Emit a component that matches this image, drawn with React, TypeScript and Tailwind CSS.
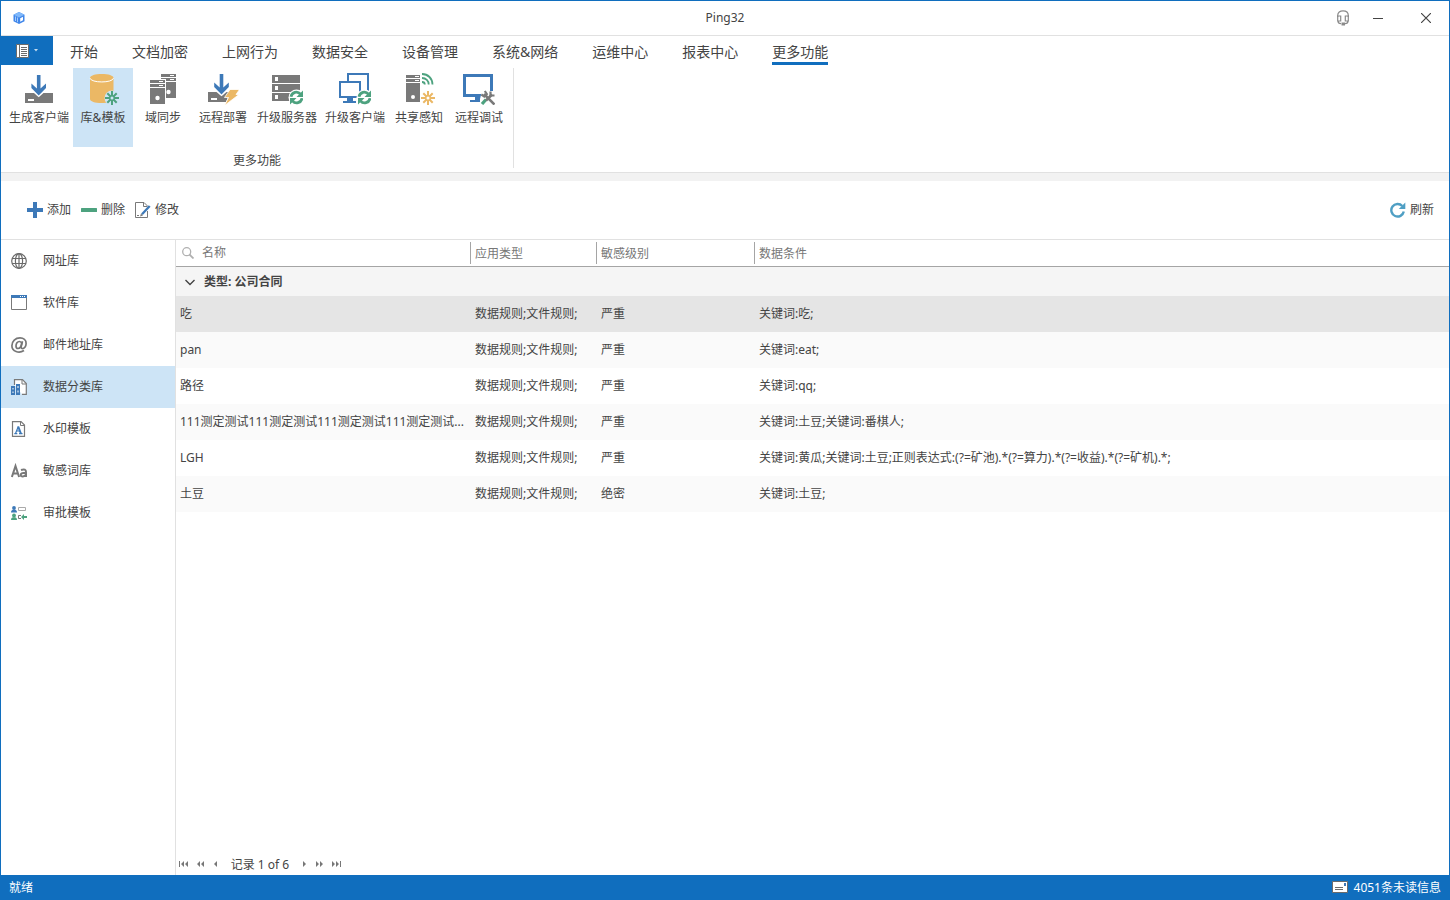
import type { ReactNode } from "react";
import clsx from "clsx";

interface IIconProps {
  size?: number;
  children: ReactNode;
}

interface IRibbonAction {
  label: string;
  wide?: boolean;
  active?: boolean;
  icon: ReactNode;
}

interface IDataClass {
  name: string;
  type: string;
  level: string;
  condition: string;
}

const GRAY = "#797979";
const BLUE = "#3d79b8";
const GREEN = "#4da27f";
const YELLOW = "#ebb865";

function Icon({ size = 16, children }: IIconProps) {
  return (
    <svg
      width={size}
      height={size}
      viewBox={`0 0 ${size} ${size}`}
      fill="none"
      className="shrink-0"
      aria-hidden="true"
    >
      {children}
    </svg>
  );
}

function SyncBadge() {
  return (
    <g>
      <circle cx="25.5" cy="24.5" r="8" fill="#fff" />
      <path
        d="M20 23.8c.8-4.800 6.500-6.300 9.500-2.600M31 25.200c-.8 4.800-6.500 6.300-9.500 2.600"
        stroke={GREEN}
        strokeWidth="2.800"
      />
      <path d="M32 17.500v6.500h-6.500zM19 31.500v-6.500h6.500z" fill={GREEN} />
    </g>
  );
}

function DownArrow({ x }: { x: number }) {
  return (
    <path
      d={`M${x - 1.8} 2h3.600v13.500l5.500-5v4.500L${x} 22.500l-7.300-7.500v-4.500l5.500 5z`}
      fill={BLUE}
    />
  );
}

function Spokes({ x, y, color, hole }: { x: number; y: number; color: string; hole: string }) {
  return (
    <g>
      <path
        d={`M${x} ${y - 7}v14M${x - 7} ${y}h14M${x - 4.7} ${y - 4.7}l9.400 9.400M${x + 4.7} ${y - 4.7}l-9.400 9.400`}
        stroke={color}
        strokeWidth="2"
      />
      <circle cx={x} cy={y} r="3" fill={color} />
      <circle cx={x} cy={y} r="1.500" fill={hole} />
    </g>
  );
}

const tabs = [
  "开始",
  "文档加密",
  "上网行为",
  "数据安全",
  "设备管理",
  "系统&网络",
  "运维中心",
  "报表中心",
  "更多功能",
];

const ribbonActions: IRibbonAction[] = [
  {
    label: "生成客户端",
    wide: true,
    icon: (
      <Icon size={32}>
        <path d="M2 20h28v10h-28z" fill={GRAY} />
        <path d="M11 20h9.500l-4.800 4.200z" fill="#fff" />
        <DownArrow x={15.7} />
        <path d="M5 26h6v2h-6z" fill="#fff" />
      </Icon>
    ),
  },
  {
    label: "库&模板",
    active: true,
    icon: (
      <Icon size={32}>
        <path
          d="M3 5v21c0 2.500 5 4 11.500 4s12-1.500 12-4V5c0-2.500-5.200-4-11.700-4S3 2.500 3 5z"
          fill={YELLOW}
        />
        <path d="M3 5.200c1 5 22.500 5 23.500 0" stroke="#fff" strokeWidth="1" />
        <circle cx="25" cy="25" r="7.500" fill="#cde4f6" />
        <Spokes x={25} y={25} color={GREEN} hole="#cde4f6" />
      </Icon>
    ),
  },
  {
    label: "域同步",
    icon: (
      <Icon size={32}>
        <path d="M14 1h15v24h-15z" fill={GRAY} />
        <path d="M14 4.500h15M14 8.500h15" stroke="#fff" />
        <path d="M23 2.500h4M23 6.500h4" stroke="#fff" />
        <circle cx="21.500" cy="19" r="2.200" fill="#fff" />
        <path d="M2 6h17v26h-17z" fill="#fff" />
        <path d="M3 7h15v24h-15z" fill={GRAY} />
        <path d="M3 10.500h15M3 14.500h15" stroke="#fff" />
        <path d="M12 8.500h4M12 12.500h4" stroke="#fff" />
        <circle cx="10.500" cy="25" r="2.200" fill="#fff" />
      </Icon>
    ),
  },
  {
    label: "远程部署",
    icon: (
      <Icon size={32}>
        <path d="M1 19h22l-4 10h-18z" fill={GRAY} />
        <path d="M9.500 19h10l-5 4.200z" fill="#fff" />
        <g transform="translate(0 -1)">
          <DownArrow x={14.5} />
        </g>
        <path d="M4 25h6v2h-6z" fill="#fff" />
        <path
          d="M23 16.500h9.500l-3.500 5h3L17.500 32.500l4-8h-4z"
          fill={YELLOW}
          stroke="#fff"
          strokeWidth=".8"
        />
      </Icon>
    ),
  },
  {
    label: "升级服务器",
    wide: true,
    icon: (
      <Icon size={32}>
        <path d="M1 2h28v8H1zM1 11h28v8H1zM1 20h28v8H1z" fill={GRAY} />
        <path d="M4 4h3v4H4zM4 13h3v4H4zM4 22h3v4H4z" fill="#fff" />
        <SyncBadge />
      </Icon>
    ),
  },
  {
    label: "升级客户端",
    wide: true,
    icon: (
      <Icon size={32}>
        <path d="M9 8V1h20v17h-7" stroke={BLUE} strokeWidth="2" />
        <path d="M1 9h20v15h-20z" stroke={BLUE} strokeWidth="2" />
        <path d="M8 25h6v3h3v2H4v-2h4z" fill={BLUE} />
        <SyncBadge />
      </Icon>
    ),
  },
  {
    label: "共享感知",
    icon: (
      <Icon size={32}>
        <path d="M3 2h14v27H3z" fill={GRAY} />
        <path d="M3 5.500h14M3 9.500h14" stroke="#fff" />
        <path d="M12 3.500h4M12 7.500h4" stroke="#fff" />
        <circle cx="10" cy="24" r="2" fill="#fff" />
        <path
          d="M19 1c6 0 10.500 4.500 10.500 10.500M19 5c4 0 6.700 3 6.700 6.500M19 9c1.700 0 2.800 1 2.800 2.500"
          stroke={GREEN}
          strokeWidth="1.800"
        />
        <circle cx="25" cy="25" r="7" fill="#fff" />
        <Spokes x={25} y={25} color={YELLOW} hole="#fff" />
      </Icon>
    ),
  },
  {
    label: "远程调试",
    icon: (
      <Icon size={32}>
        <path d="M1.500 2.500h27v20h-27z" stroke={BLUE} strokeWidth="3" />
        <path d="M12 24h6v3h2v2H7v-2h5z" fill={BLUE} />
        <path d="M19 18h13v14H17v-6z" fill="#fff" />
        <path d="M23 26.500l-4 4.500" stroke={GREEN} strokeWidth="3.200" />
        <path d="M21 21l10.500 10.500" stroke={GRAY} strokeWidth="2.600" />
        <path d="M29 21.500l-6 6" stroke={GRAY} strokeWidth="2.600" />
        <path
          d="M18.300 21.500l3 2 2.500-2.500-2-3M27.500 18.500v4h4"
          stroke={GRAY}
          strokeWidth="2.200"
        />
      </Icon>
    ),
  },
];

const libraries = [
  {
    label: "网址库",
    icon: (
      <Icon>
        <g stroke="#6a6a6a" strokeWidth="1.200">
          <circle cx="8" cy="8" r="7.300" />
          <ellipse cx="8" cy="8" rx="3.600" ry="7.300" />
          <path d="M1 5.500h14M1 10.500h14M8 1v14" />
        </g>
      </Icon>
    ),
  },
  {
    label: "软件库",
    icon: (
      <Icon>
        <path d="M.5 1.500h15v13H.500z" stroke={GRAY} />
        <path d="M0 0h16v3H0z" fill={BLUE} />
        <path d="M9 1h1v1H9zM11 1h1v1h-1zM13 1h1v1h-1z" fill="#fff" />
      </Icon>
    ),
  },
  {
    label: "邮件地址库",
    icon: (
      <Icon>
        <g stroke="#777" strokeWidth="1.700">
          <path d="M13 13.500C8 16.800.900 14.500.900 8.700.900 4.200 4.400.900 9 .900c3.600 0 6.100 2.200 6.100 5.500 0 3.200-2 5.200-3.600 5.200-1.500 0-1.500-1.200-1.200-2.600L11.500 4.300" />
          <path d="M10.700 6.500C10.400 5 9.500 4.500 8.400 4.500 6.400 4.500 5 6.600 5 8.900c0 1.700.8 2.600 2 2.600 1.900 0 3.200-2 3.700-5z" />
        </g>
      </Icon>
    ),
  },
  {
    label: "数据分类库",
    icon: (
      <Icon>
        <path d="M3.500 6V.700h8L15.300 4.500v10.800H11" fill="#fff" stroke={GRAY} strokeWidth="1.200" />
        <path d="M11 1v4h4" stroke={GRAY} />
        <path d="M0 7h4v9H0zM5 5h4v11H5z" fill={BLUE} />
        <path d="M1.500 9h1v1.500h-1zM1.500 12.500h1V14h-1zM6.500 7h1v2h-1zM6.500 11.500h1v2h-1z" fill="#fff" />
      </Icon>
    ),
  },
  {
    label: "水印模板",
    icon: (
      <Icon>
        <path d="M1.500.600h8.500l3.500 3.500v11.300h-12z" stroke={GRAY} strokeWidth="1.200" />
        <path d="M9.500 1v3.500h4" stroke={GRAY} />
        <path
          d="M3.300 12.600h3M8 12.600h3.500M4.500 12.500L7.300 5.500M5.500 10h3.500"
          stroke={BLUE}
          strokeWidth="1.200"
        />
        <path d="M7.200 5.500l2.700 7" stroke={BLUE} strokeWidth="2" />
      </Icon>
    ),
  },
  {
    label: "敏感词库",
    icon: (
      <Icon>
        <path d="M.9 14L4.500 3 8.100 14M2 10.500h5" stroke={GRAY} strokeWidth="2" />
        <path
          d="M10 7c3.500-1.200 5-.3 5 2V14M15 9.700c-3.500 0-5.300.6-5.300 2.200 0 2.200 4 2 5.300-.4"
          stroke={GRAY}
          strokeWidth="2"
        />
      </Icon>
    ),
  },
  {
    label: "审批模板",
    icon: (
      <Icon>
        <circle cx="3" cy="3" r="1.900" fill={BLUE} />
        <path d="M0 7.500C0 5 1.500 4.800 3 4.800s3 .2 3 2.700z" fill={BLUE} />
        <circle cx="3" cy="10.500" r="1.900" fill={GREEN} />
        <path d="M0 15c0-2.500 1.500-2.700 3-2.700s3 .2 3 2.700z" fill={GREEN} />
        <path d="M7.500 2.500h7v3h-7z" stroke="#aaa" />
        <path d="M10 10.500H7.500v3H10" stroke={GRAY} />
        <path d="M10 12l3-3v2h3v2h-3v2z" fill={GREEN} />
      </Icon>
    ),
  },
];

const rows: IDataClass[] = [
  { name: "吃", type: "数据规则;文件规则;", level: "严重", condition: "关键词:吃;" },
  { name: "pan", type: "数据规则;文件规则;", level: "严重", condition: "关键词:eat;" },
  { name: "路径", type: "数据规则;文件规则;", level: "严重", condition: "关键词:qq;" },
  {
    name: "111测定测试111测定测试111测定测试111测定测试...",
    type: "数据规则;文件规则;",
    level: "严重",
    condition: "关键词:土豆;关键词:番棋人;",
  },
  {
    name: "LGH",
    type: "数据规则;文件规则;",
    level: "严重",
    condition: "关键词:黄瓜;关键词:土豆;正则表达式:(?=矿池).*(?=算力).*(?=收益).*(?=矿机).*;",
  },
  { name: "土豆", type: "数据规则;文件规则;", level: "绝密", condition: "关键词:土豆;" },
];

function TitleBar() {
  return (
    <header className="grid h-[35px] grid-cols-[1fr_auto_1fr] items-center border-b border-[#e1e1e1]">
      <div className="pl-3">
        <svg width="12" height="12" viewBox="0 0 12 12" aria-hidden="true">
          <path d="M6 0l5.500 2.700v6.500L6 12 .500 9.200V2.700z" fill="#3f86ea" />
          <path d="M6 0l5.500 2.700L6 5.400.500 2.700z" fill="#7fb8fa" />
          <path d="M7.200 6.300l2.800-1.500v3.500L7.200 9.800z" fill="#fff" />
          <path d="M2.500 4.500v4.500M4.500 5.500v4.700" stroke="#bcdcff" strokeWidth=".8" />
        </svg>
      </div>
      <h1>Ping32</h1>
      <div className="flex h-full justify-end">
        <button aria-label="客服" className="flex w-5 items-center justify-center">
          <Icon>
            <g stroke="#8a8a8a" strokeWidth="1.200">
              <path d="M2.700 7V5.500C2.700 2.500 5 .800 8 .800s5.300 1.700 5.300 4.700V7" />
              <path d="M2.700 6h3v5h-3zM10.300 6h3v5h-3zM3 11c0 1.800 1 2.700 3 2.700M13 11c0 1.800-1 2.700-3 2.700" />
            </g>
            <path d="M6.500 12.500h3.500v3H6.500z" fill="#8a8a8a" />
          </Icon>
        </button>
        <button aria-label="最小化" className="flex w-[50px] items-center justify-center">
          <Icon size={10}>
            <path d="M0 5.500h10" stroke="#444" />
          </Icon>
        </button>
        <button aria-label="关闭" className="flex w-[46px] items-center justify-center">
          <Icon size={10}>
            <path d="M0 0l10 10M10 0L0 10" stroke="#444" strokeWidth="1.200" />
          </Icon>
        </button>
      </div>
    </header>
  );
}

function TabBar() {
  return (
    <nav className="flex h-[29px]">
      <button aria-label="文件" className="flex w-[52px] items-center justify-center gap-1 bg-[#106ebe]">
        <Icon size={14}>
          <path d="M.5.500h12v13H.500z" fill="#fff" stroke="#6b6b6b" />
          <path d="M3.500 1v12" stroke="#6b6b6b" />
          <path d="M5 3.500h6M5 5.500h6M5 7.500h6M5 9.500h6M5 11.500h6" stroke="#6b6b6b" />
        </Icon>
        <svg width="4" height="3" viewBox="0 0 4 3" aria-hidden="true">
          <path d="M0 0h4L2 2.500z" fill="#c5dcf0" />
        </svg>
      </button>
      {tabs.map((tab) => (
        <button key={tab} className="px-[17px] text-sm">
          <span
            className={clsx(
              "flex h-[29px] items-center border-b-3 pt-1.5",
              tab === "更多功能" ? "border-[#106ebe]" : "border-transparent",
            )}
          >
            {tab}
          </span>
        </button>
      ))}
    </nav>
  );
}

function Ribbon() {
  return (
    <section className="flex h-[108px] border-b border-[#e1e1e1] pt-[3px]">
      <div className="mb-1 flex flex-col border-r border-[#e1e1e1] px-1">
        <div className="flex h-20">
          {ribbonActions.map((action) => (
            <button
              key={action.label}
              className={clsx(
                "flex flex-col items-center gap-[5px] pt-[5px] whitespace-nowrap",
                action.wide ? "w-[68px]" : "w-[60px]",
                action.active && "bg-[#cde4f6]",
              )}
            >
              {action.icon}
              {action.label}
            </button>
          ))}
        </div>
        <div className="pt-[7px] text-center leading-[14px]">更多功能</div>
      </div>
    </section>
  );
}

function Toolbar() {
  return (
    <div className="flex h-[59px] items-center gap-2.5 border-b border-[#e1e1e1] pr-[15px] pl-[26px]">
      <button className="flex items-center gap-1">
        <Icon>
          <path d="M6 0h4v6h6v4h-6v6H6v-6H0V6h6z" fill={BLUE} />
        </Icon>
        添加
      </button>
      <button className="flex items-center gap-1">
        <Icon>
          <rect y="6" width="16" height="4" rx=".500" fill={GREEN} />
        </Icon>
        删除
      </button>
      <button className="flex items-center gap-1">
        <Icon>
          <path d="M12.500 9v6.500H.500V.500h8.500l3.500 3.500" stroke={GRAY} />
          <path d="M8.500.500v4h4" stroke={GRAY} />
          <path d="M14.700 4L7 12.300" stroke={BLUE} strokeWidth="2.300" />
          <path d="M5 14.500l1-3 2 2zM2 13h2v1H2z" fill={GRAY} />
        </Icon>
        修改
      </button>
      <button className="ml-auto flex items-center gap-1">
        <Icon>
          <path d="M12.300 4A6.300 6.300 0 1 0 13.800 9.500" stroke="#4f9fc4" strokeWidth="2.400" />
          <path d="M15.300.500v6.500H8.800z" fill="#4f9fc4" />
        </Icon>
        刷新
      </button>
    </div>
  );
}

function Sidebar() {
  return (
    <aside className="w-[175px] shrink-0 border-r border-[#e1e1e1]">
      {libraries.map((item) => (
        <button
          key={item.label}
          className={clsx(
            "flex h-[42px] w-full items-center gap-4 pl-2.5",
            item.label === "数据分类库" && "bg-[#cde4f6]",
          )}
        >
          {item.icon}
          {item.label}
        </button>
      ))}
    </aside>
  );
}

function DataTable() {
  return (
    <table className="w-full table-fixed border-separate border-spacing-0 text-left">
      <colgroup>
        <col className="w-[294px]" />
        <col className="w-[126px]" />
        <col className="w-[158px]" />
        <col />
      </colgroup>
      <thead className="text-[#777]">
        <tr className="h-[27px]">
          <th className="border-b border-[#a5a5a5] p-0 font-normal">
            <div className="flex items-center gap-2 pl-1.5">
              <Icon size={12}>
                <circle cx="4.700" cy="4.700" r="4" stroke="#b0b0b0" strokeWidth="1.300" />
                <path d="M7.500 7.500l4 4" stroke="#b0b0b0" strokeWidth="1.800" />
              </Icon>
              名称
            </div>
          </th>
          {["应用类型", "敏感级别", "数据条件"].map((title) => (
            <th key={title} className="border-b border-[#a5a5a5] p-0 font-normal">
              <div className="flex h-[22px] items-center border-l border-[#a5a5a5] pt-0.5 pl-1">
                {title}
              </div>
            </th>
          ))}
        </tr>
      </thead>
      <tbody>
        <tr className="h-[29px] bg-[#f5f5f5]">
          <td colSpan={4} className="p-0">
            <button className="flex items-center gap-2 pl-2 font-bold">
              <Icon size={12}>
                <path d="M1.500 4L6 8.500 10.500 4" stroke="#444" strokeWidth="1.400" />
              </Icon>
              类型: 公司合同
            </button>
          </td>
        </tr>
        {rows.map((row, index) => (
          <tr
            key={row.name}
            className={clsx("h-9", index === 0 ? "bg-[#e5e5e5]" : index % 2 === 1 && "bg-[#fafafa]")}
          >
            <td className="truncate p-0 pl-1">{row.name}</td>
            <td className="truncate p-0 pl-[5px]">{row.type}</td>
            <td className="truncate p-0 pl-[5px]">{row.level}</td>
            <td className="truncate p-0 pl-[5px]">{row.condition}</td>
          </tr>
        ))}
      </tbody>
    </table>
  );
}

function PagerButton({ label, d, bar }: { label: string; d: string; bar?: string }) {
  return (
    <button aria-label={label} className="flex h-4 w-4 items-center justify-center">
      <svg width="10" height="6" viewBox="0 0 10 6" aria-hidden="true">
        <path d={d} fill="#777" />
        {bar && <path d={bar} stroke="#777" />}
      </svg>
    </button>
  );
}

function Pager() {
  return (
    <div className="mt-auto flex h-[22px] items-center">
      <PagerButton label="第一页" d="M5 0v6L2 3zM9 0v6L6 3z" bar="M.5 0v6" />
      <PagerButton label="向前翻页" d="M5 0v6L2 3zM9 0v6L6 3z" />
      <PagerButton label="上一条" d="M6 0v6L3 3z" />
      <span className="w-[72px] pt-0.5 text-center">记录 1 of 6</span>
      <PagerButton label="下一条" d="M4 0v6l3-3z" />
      <PagerButton label="向后翻页" d="M1 0v6l3-3zM5 0v6l3-3z" />
      <PagerButton label="最后一页" d="M1 0v6l3-3zM5 0v6l3-3z" bar="M9.500 0v6" />
    </div>
  );
}

export default function App() {
  return (
    <div className="flex min-h-screen flex-col border border-[#106ebe] bg-white font-['Noto_Sans','Noto_Sans_CJK_SC',sans-serif] text-xs text-[#444]">
      <TitleBar />
      <TabBar />
      <Ribbon />
      <div className="h-2 bg-[#f2f2f2]" />
      <Toolbar />
      <div className="flex flex-1">
        <Sidebar />
        <main className="flex min-w-0 flex-1 flex-col">
          <DataTable />
          <Pager />
        </main>
      </div>
      <footer className="flex h-6 items-center justify-between bg-[#106ebe] px-2 pt-0.5 text-white">
        <span>就绪</span>
        <button className="flex items-center gap-1.5">
          <Icon>
            <path d="M.5 1.500h15v11H.500z" fill="#fff" stroke="#6b6b6b" />
            <path d="M3 7.500h8M3 9.500h8" stroke="#6b6b6b" />
            <path d="M12 3h2v3h-2z" fill={BLUE} />
          </Icon>
          4051条未读信息
        </button>
      </footer>
    </div>
  );
}
